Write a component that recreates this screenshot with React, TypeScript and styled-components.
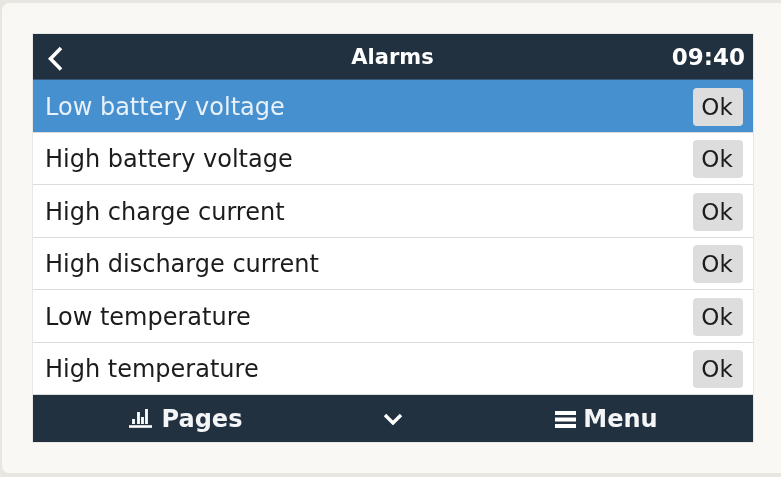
import React from 'react';
import styled, { createGlobalStyle } from 'styled-components';

const NAVY = '#223140';
const BLUE = '#4790d0';

const GlobalStyle = createGlobalStyle`
  html, body {
    margin: 0;
    padding: 0;
    background: #e8e6e1;
  }
  body {
    font-family: "DejaVu Sans", sans-serif;
  }
`;

const Page = styled.div`
  width: 781px;
  height: 477px;
  box-sizing: border-box;
  padding: 3px 0 4px 2px;
  overflow: hidden;
`;

const Card = styled.div`
  height: 100%;
  box-sizing: border-box;
  background: #f9f8f4;
  border-radius: 7px 0 0 7px;
  padding: 31px 0 0 31px;
`;

const Screen = styled.div`
  width: 720px;
  height: 408px;
  display: flex;
  flex-direction: column;
  background: #fff;
  box-shadow: 0 0 0 1px #e9e8e4;
  filter: blur(0.35px);
`;

const TopBar = styled.div`
  height: 46px;
  flex: none;
  box-sizing: border-box;
  display: grid;
  grid-template-columns: 1fr auto 1fr;
  align-items: center;
  padding: 0 8px 0 14px;
  background: ${NAVY};
  border-bottom: 1px solid #36587a;
  color: #fff;
  font-size: 21px;
  font-weight: bold;
`;

const Title = styled.div`
  justify-self: center;
  margin-right: 7px;
`;

const Clock = styled.div`
  justify-self: end;
  font-size: 23px;
`;

const List = styled.div`
  flex: 1;
  display: flex;
  flex-direction: column;
`;

const Row = styled.div<{ $active?: boolean }>`
  flex: 1;
  display: flex;
  align-items: center;
  justify-content: space-between;
  padding: 2px 10px 0 12px;
  font-size: 24px;
  color: ${(p) => (p.$active ? '#e8f1f9' : '#1c1c1c')};
  background: ${(p) => (p.$active ? BLUE : '#fff')};
  border-bottom: 1px solid #dcdcdc;
`;

const Status = styled.div`
  width: 50px;
  height: 38px;
  box-sizing: border-box;
  display: flex;
  align-items: center;
  justify-content: center;
  padding-right: 2px;
  border-radius: 4px;
  background: #dddddd;
  color: #1c1c1c;
  font-size: 23px;
`;

const BottomBar = styled.div`
  height: 47px;
  flex: none;
  display: grid;
  grid-template-columns: 305px 109px 1fr;
  align-items: center;
  background: ${NAVY};
  color: #f4f5f6;
  font-size: 24px;
  font-weight: bold;
`;

const BarItem = styled.div<{ $gap?: number; $indent?: number }>`
  display: flex;
  align-items: center;
  justify-content: center;
  gap: ${(p) => p.$gap ?? 0}px;
  padding-left: ${(p) => p.$indent ?? 0}px;
`;

const rows = [
  'Low battery voltage',
  'High battery voltage',
  'High charge current',
  'High discharge current',
  'Low temperature',
  'High temperature',
];

export default function App() {
  return (
    <Page>
      <GlobalStyle />
      <Card>
        <Screen>
          <TopBar>
            <svg width="18" height="30" viewBox="0 0 18 30">
              <path d="M14 6 L3.500 16.800 L14 27.500" fill="none" stroke="#fff" strokeWidth="3.6" />
            </svg>
            <Title>Alarms</Title>
            <Clock>09:40</Clock>
          </TopBar>
          <List>
            {rows.map((label, i) => (
              <Row key={label} $active={i === 0}>
                {label}
                <Status>Ok</Status>
              </Row>
            ))}
          </List>
          <BottomBar>
            <BarItem $gap={10}>
              <svg width="23" height="19" viewBox="0 0 23 19">
                <path d="M0 17.500h23" stroke="#fff" strokeWidth="2.600" fill="none" />
                <path d="M4.500 15v-5M9.500 15V3M13.500 15V8M17.500 15V0" stroke="#fff" strokeWidth="2.800" fill="none" />
              </svg>
              Pages
            </BarItem>
            <BarItem>
              <svg width="20" height="12" viewBox="0 0 20 12">
                <path d="M2 2 L10 10 L18 2" fill="none" stroke="#fff" strokeWidth="3.400" />
              </svg>
            </BarItem>
            <BarItem $gap={7} $indent={13}>
              <svg width="21" height="18" viewBox="0 0 21 18">
                <path d="M0 3h21M0 9.500h21M0 16h21" stroke="#fff" strokeWidth="4" fill="none" />
              </svg>
              Menu
            </BarItem>
          </BottomBar>
        </Screen>
      </Card>
    </Page>
  );
}
